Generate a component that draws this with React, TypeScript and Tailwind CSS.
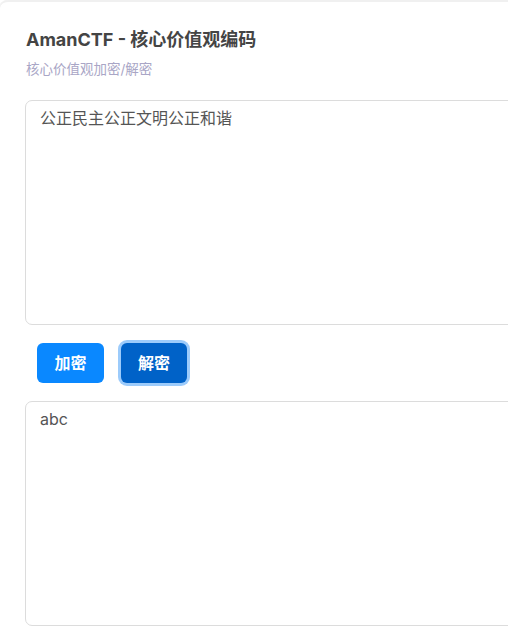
import React from "react";

export default function App() {
  return (
    <div className="w-[508px] h-[633px] overflow-hidden bg-white" style={{ fontFamily: 'Inter, "Noto Sans CJK SC", sans-serif' }}>
      <div className="w-[620px] min-h-[640px] rounded-tl-[8px] border-t-2 border-[#f0f0f0] bg-white pl-[25px] pt-[25px] shadow-[-1px_0_0_#f4f4f4]">
        <h1 className="text-[18px] leading-[26px] font-bold text-[#444444] pl-[1px]">AmanCTF - 核心价值观编码</h1>
        <p className="mt-[7px] text-[13.5px] leading-[18px] text-[#a9a6c6] pl-[1px]">核心价值观加密/解密</p>
        <textarea
          className="mt-[22px] block w-[560px] h-[225px] resize-none rounded-[7px] border border-[#dcdcdc] px-[14px] pt-[5px] pb-[8px] text-[16px] leading-[24px] text-[#555555] outline-none"
          defaultValue="公正民主公正文明公正和谐"
        />
        <div className="flex gap-[17px] pl-[12px] mt-[18px] mb-[18px]">
          <button className="w-[67px] h-[40px] rounded-[6px] bg-[#0a88ff] text-white text-[16px] font-bold">加密</button>
          <button className="w-[66px] h-[40px] rounded-[6px] bg-[#0062c8] text-white text-[16px] font-bold ring-[3px] ring-[#9ccbfb]">解密</button>
        </div>
        <textarea
          className="block w-[560px] h-[225px] resize-none rounded-[7px] border border-[#dcdcdc] px-[14px] pt-[5px] pb-[8px] text-[16px] leading-[24px] text-[#555555] outline-none"
          defaultValue="abc"
        />
      </div>
    </div>
  );
}
